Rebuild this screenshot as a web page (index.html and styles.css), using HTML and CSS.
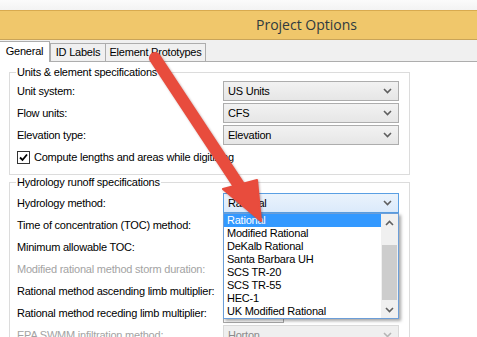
FILE: index.html
```html
<!DOCTYPE html>
<html>
<head>
<meta charset="utf-8">
<link rel="stylesheet" href="styles.css">
</head>
<body>
<div class="window">
  <div class="topstrip"></div>
  <div class="titlebar"><span class="title">Project Options</span></div>
  <div class="tabstrip">
    <div class="tab active">General</div>
    <div class="tab">ID Labels</div>
    <div class="tab">Element Prototypes</div>
  </div>
  <div class="content">
    <fieldset class="group g1">
      <legend>Units &amp; element specifications</legend>
      <div class="row"><span class="label">Unit system:</span><div class="select"><span>US Units</span><svg class="chev" viewBox="0 0 9 6" width="9" height="6"><polyline points="1,1 4.5,4.5 8,1"/></svg></div></div>
      <div class="row"><span class="label">Flow units:</span><div class="select"><span>CFS</span><svg class="chev" viewBox="0 0 9 6" width="9" height="6"><polyline points="1,1 4.5,4.5 8,1"/></svg></div></div>
      <div class="row"><span class="label">Elevation type:</span><div class="select"><span>Elevation</span><svg class="chev" viewBox="0 0 9 6" width="9" height="6"><polyline points="1,1 4.5,4.5 8,1"/></svg></div></div>
      <div class="row checkrow"><span class="checkbox"><svg viewBox="0 0 11 11" width="11" height="11"><polyline points="2,5.5 4.5,8 9,2.5"/></svg></span><span>Compute lengths and areas while digitizing</span></div>
    </fieldset>
    <fieldset class="group g2">
      <legend>Hydrology runoff specifications</legend>
      <div class="row"><span class="label">Hydrology method:</span><div class="select focus"><span>Rational</span><svg class="chev" viewBox="0 0 9 6" width="9" height="6"><polyline points="1,1 4.5,4.5 8,1"/></svg></div></div>
      <div class="row"><span class="label">Time of concentration (TOC) method:</span><div class="select"><span>User defined</span><svg class="chev" viewBox="0 0 9 6" width="9" height="6"><polyline points="1,1 4.5,4.5 8,1"/></svg></div></div>
      <div class="row"><span class="label">Minimum allowable TOC:</span><div class="textbox"></div></div>
      <div class="row"><span class="label disabled">Modified rational method storm duration:</span><div class="textbox off"></div></div>
      <div class="row"><span class="label">Rational method ascending limb multiplier:</span><div class="textbox"></div></div>
      <div class="row"><span class="label">Rational method receding limb multiplier:</span><div class="textbox"></div></div>
      <div class="row"><span class="label disabled">EPA SWMM infiltration method:</span><div class="select off"><span>Horton</span><svg class="chev" viewBox="0 0 9 6" width="9" height="6"><polyline points="1,1 4.5,4.5 8,1"/></svg></div></div>
    </fieldset>
  </div>

  <div class="droplist">
    <ul class="items">
      <li class="sel">Rational</li>
      <li>Modified Rational</li>
      <li>DeKalb Rational</li>
      <li>Santa Barbara UH</li>
      <li>SCS TR-20</li>
      <li>SCS TR-55</li>
      <li>HEC-1</li>
      <li>UK Modified Rational</li>
    </ul>
    <div class="scrollbar">
      <div class="sbtn"><svg viewBox="0 0 9 6" width="9" height="6"><polyline points="1,5 4.5,1.5 8,5"/></svg></div>
      <div class="track"><div class="thumb"></div></div>
      <div class="sbtn"><svg viewBox="0 0 9 6" width="9" height="6"><polyline points="1,1 4.5,4.5 8,1"/></svg></div>
    </div>
  </div>

  <svg class="arrow" viewBox="0 0 477 337" width="477" height="337">
    <line x1="155" y1="58" x2="240" y2="187" stroke="#e84c3d" stroke-width="12" stroke-linecap="round"/>
    <polygon points="223,189 257,180 261,221" fill="#e84c3d" stroke="#e84c3d" stroke-width="2" stroke-linejoin="round"/>
  </svg>
</div>
</body>
</html>
```
FILE: styles.css
```css
* { box-sizing: border-box; }
html, body { margin: 0; padding: 0; }
body {
  width: 477px;
  height: 337px;
  overflow: hidden;
  font-family: "Liberation Sans", Arial, sans-serif;
  font-size: 11px;
  letter-spacing: -0.22px;
  color: #000;
  background: #fff;
}
.window { position: relative; width: 477px; height: 337px; overflow: hidden; background: #fff; }
.topstrip { height: 10px; background: linear-gradient(#fbfbfb, #f3f3f3); }
.titlebar {
  height: 30px;
  background: #f0c76b;
  border-top: 1px solid #d8aa4f;
  border-bottom: 1px solid #c9a459;
  display: flex;
  align-items: center;
  padding-left: 256px;
}
.title {
  font-family: "Open Sans", "Noto Sans", sans-serif;
  font-size: 14px;
  letter-spacing: 0;
  color: #2f3a3f;
  line-height: 1;
}
.tabstrip {
  height: 22px;
  background: #f0f0f0;
  border-bottom: 1px solid #adadad;
  display: flex;
  align-items: flex-end;
}
.tab {
  height: 18px;
  border: 1px solid #adadad;
  border-bottom: none;
  background: #f0f0f0;
  display: flex;
  align-items: center;
  justify-content: center;
  line-height: 13px;
  margin-bottom: 0;
}
.tab.active {
  width: 51px;
  height: 21px;
  margin-left: -1px;
  margin-bottom: -1px;
  background: #fff;
  padding-bottom: 1px;
}
.tab:nth-child(2) { width: 56px; margin-left: 0; }
.tab:nth-child(3) { width: 101px; margin-left: -1px; }
.content { padding: 4px 0 0 9px; }
.group {
  margin: 0;
  width: 401px;
  border: 1px solid #dcdcdc;
  padding: 1px 0 6px 7px;
}
.group legend {
  padding: 0 1px;
  margin-left: -1px;
  line-height: 13px;
}
.g2 { margin-top: 1px; padding-top: 3px; }
.row {
  height: 22px;
  display: flex;
  align-items: center;
}
.label { width: 206px; flex: none; white-space: nowrap; }
.label.disabled { color: #a3a3a3; }
.select {
  width: 176px;
  height: 20px;
  border: 1px solid #adadad;
  background: linear-gradient(#f2f2f2, #e6e6e6);
  display: flex;
  align-items: center;
  justify-content: space-between;
  padding: 0 6px 0 4px;
}
.select .chev { fill: none; stroke: #5f5f5f; stroke-width: 1.6; }
.select.focus { border-color: #5a9fe3; background: linear-gradient(#eaf3fc, #dbeafb); }
.select.off { border-color: #d9d9d9; background: #efefef; color: #8a8a8a; }
.select.off .chev { stroke: #b5b5b5; }
.textbox {
  width: 61px;
  height: 20px;
  border: 1px solid #a9a9a9;
  background: #fff;
}
.textbox.off { border-color: #cfcfcf; background: #f0f0f0; }
.checkrow { gap: 4px; }
.checkbox {
  width: 13px;
  height: 13px;
  border: 1px solid #333;
  background: #fff;
  display: flex;
  align-items: center;
  justify-content: center;
}
.checkbox svg { fill: none; stroke: #000; stroke-width: 1.8; }

.droplist {
  position: absolute;
  left: 223px;
  top: 213px;
  width: 176px;
  height: 106px;
  border: 1px solid #6c9ed8;
  background: #fff;
  display: flex;
  box-shadow: 2px 2px 3px rgba(0, 0, 0, 0.35);
}
.items { list-style: none; margin: 0; padding: 0; flex: 1; }
.items li { height: 13px; line-height: 13px; padding-left: 3px; white-space: nowrap; }
.items li.sel { background: #3399ff; color: #fff; }
.scrollbar {
  width: 17px;
  background: #f0f0f0;
  display: flex;
  flex-direction: column;
}
.sbtn {
  height: 17px;
  display: flex;
  align-items: center;
  justify-content: center;
}
.sbtn svg { fill: none; stroke: #606060; stroke-width: 1.6; }
.track { flex: 1; display: flex; flex-direction: column; justify-content: flex-end; padding: 0 1px 1px; }
.thumb { height: 55px; background: #cdcdcd; }
.arrow {
  position: absolute;
  left: 0;
  top: 0;
  pointer-events: none;
  filter: drop-shadow(1px 1px 1px rgba(90, 20, 20, 0.35));
}
```
